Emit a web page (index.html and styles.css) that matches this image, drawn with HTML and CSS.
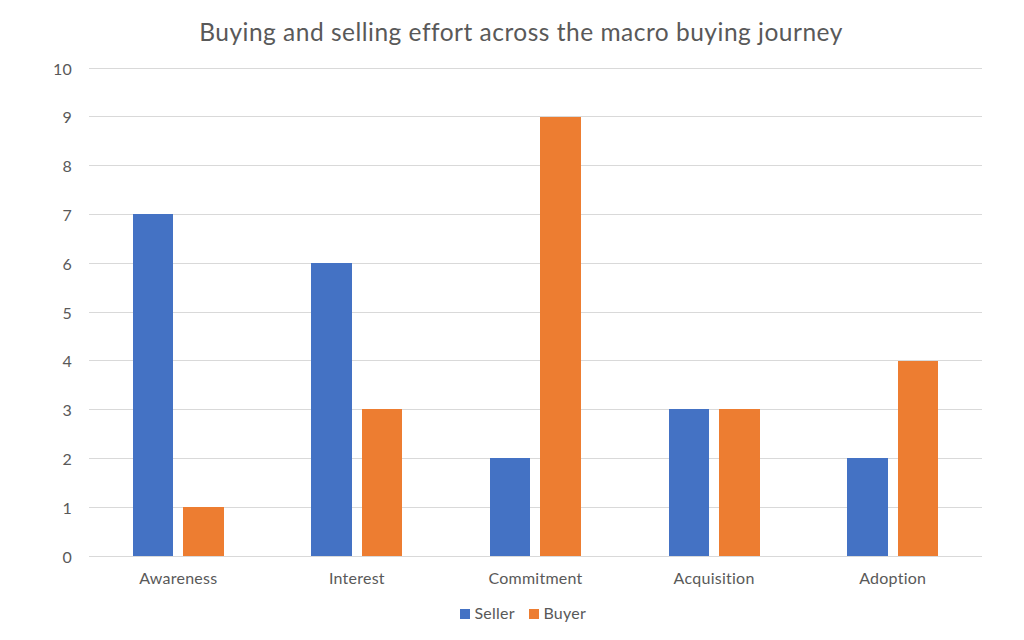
FILE: index.html
```html
<!DOCTYPE html>
<html>
<head>
<meta charset="utf-8">
<link rel="stylesheet" href="styles.css">
</head>
<body>
<div class="chart">
  <div class="title">Buying and selling effort across the macro buying journey</div>
  <div class="body">
    <div class="y-axis">
      <div class="tick"><span>10</span></div>
      <div class="tick"><span>9</span></div>
      <div class="tick"><span>8</span></div>
      <div class="tick"><span>7</span></div>
      <div class="tick"><span>6</span></div>
      <div class="tick"><span>5</span></div>
      <div class="tick"><span>4</span></div>
      <div class="tick"><span>3</span></div>
      <div class="tick"><span>2</span></div>
      <div class="tick"><span>1</span></div>
      <div class="tick"><span>0</span></div>
    </div>
    <div class="plot">
      <div class="grid-lines">
        <div class="cell"></div><div class="cell"></div><div class="cell"></div><div class="cell"></div><div class="cell"></div>
        <div class="cell"></div><div class="cell"></div><div class="cell"></div><div class="cell"></div><div class="cell"></div>
      </div>
      <div class="bars">
        <div class="group"><div class="bar seller" style="height:341.6px"></div><div class="bar buyer" style="height:48.8px"></div></div>
        <div class="group"><div class="bar seller" style="height:292.8px"></div><div class="bar buyer" style="height:146.4px"></div></div>
        <div class="group"><div class="bar seller" style="height:97.6px"></div><div class="bar buyer" style="height:439.2px"></div></div>
        <div class="group"><div class="bar seller" style="height:146.4px"></div><div class="bar buyer" style="height:146.4px"></div></div>
        <div class="group"><div class="bar seller" style="height:97.6px"></div><div class="bar buyer" style="height:195.2px"></div></div>
      </div>
    </div>
  </div>
  <div class="categories">
    <div class="cat">Awareness</div>
    <div class="cat">Interest</div>
    <div class="cat">Commitment</div>
    <div class="cat">Acquisition</div>
    <div class="cat">Adoption</div>
  </div>
  <div class="legend">
    <div class="item"><span class="swatch seller"></span>Seller</div>
    <div class="item"><span class="swatch buyer"></span>Buyer</div>
  </div>
</div>
</body>
</html>
```
FILE: styles.css
```css
html, body {
  margin: 0;
  padding: 0;
  background: #ffffff;
}

.chart {
  width: 1024px;
  height: 640px;
  display: flex;
  flex-direction: column;
  font-family: Lato, "Liberation Sans", sans-serif;
  color: #595959;
  overflow: hidden;
}

.title {
  padding-top: 16.5px;
  padding-left: 18px;
  font-size: 24.5px;
  line-height: 1.2;
  letter-spacing: 0.5px;
  text-align: center;
}

.body {
  margin-top: 21.8px;
  display: grid;
  grid-template-columns: 89px 893px;
}

.y-axis {
  height: 489px;
  padding-right: 17px;
  display: flex;
  flex-direction: column;
  justify-content: space-between;
  align-items: flex-end;
  font-size: 16px;
  line-height: 19px;
  letter-spacing: 0.25px;
}

.tick {
  height: 1px;
  display: flex;
  align-items: center;
}

.plot {
  display: grid;
  height: 489px;
}

.grid-lines {
  grid-area: 1 / 1;
  display: flex;
  flex-direction: column;
}

.cell {
  flex: 1;
  border-top: 1px solid #d9d9d9;
}

.cell:last-child {
  border-bottom: 1px solid #d9d9d9;
}

.bars {
  grid-area: 1 / 1;
  display: grid;
  grid-template-columns: repeat(5, 1fr);
  padding-bottom: 1px;
}

.group {
  display: flex;
  justify-content: center;
  align-items: flex-end;
  gap: 10px;
}

.bar {
  width: 40.5px;
}

.seller {
  background: #4472c4;
}

.buyer {
  background: #ed7d31;
}

.categories {
  margin-top: 11.8px;
  margin-left: 89px;
  width: 893px;
  display: grid;
  grid-template-columns: repeat(5, 1fr);
  font-size: 16px;
  line-height: 19.2px;
  letter-spacing: 0.25px;
}

.cat {
  text-align: center;
}

.legend {
  margin-top: 15.8px;
  padding-left: 22px;
  display: flex;
  justify-content: center;
  gap: 14px;
  font-size: 16px;
  line-height: 19.2px;
  letter-spacing: 0.25px;
}

.item {
  display: flex;
  align-items: center;
  gap: 4px;
}

.swatch {
  width: 10.5px;
  height: 10.5px;
  margin-top: 2px;
}
```
